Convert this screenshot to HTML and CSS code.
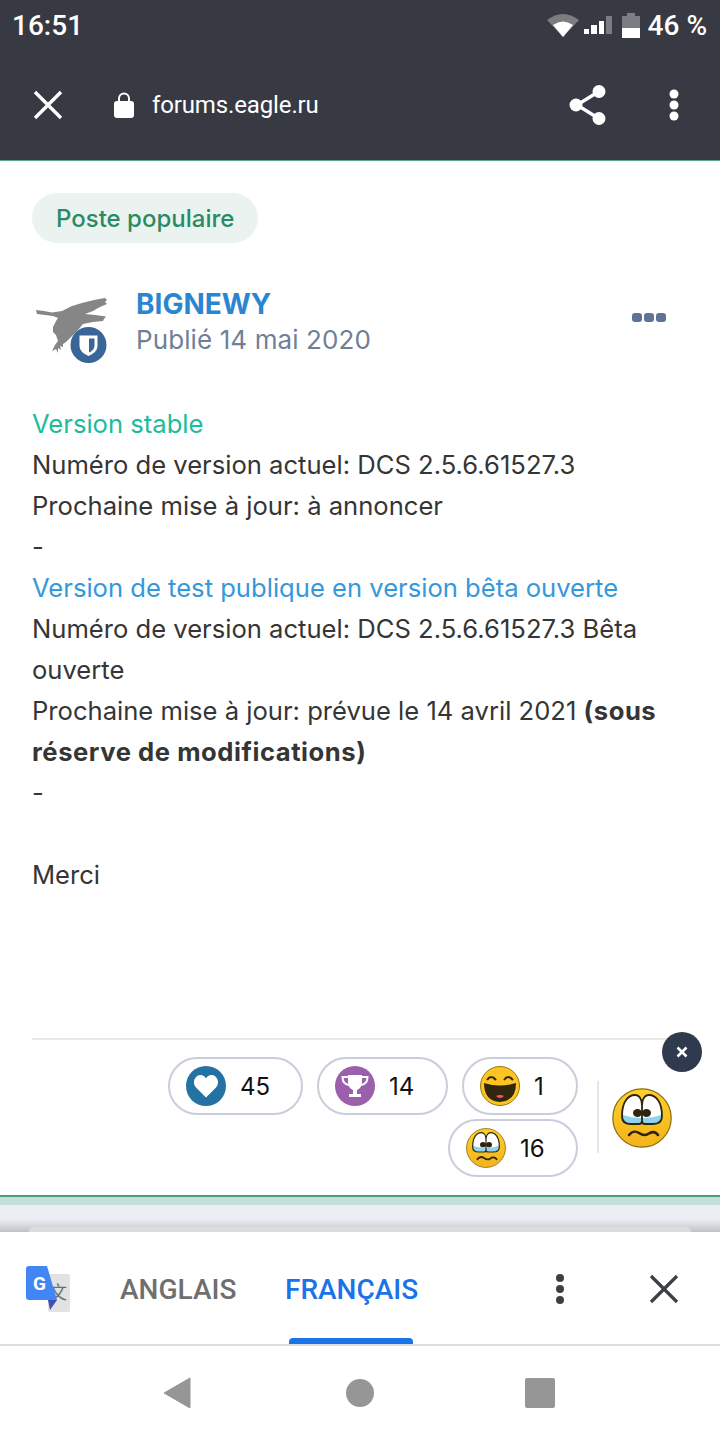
FILE: index.html
```html
<!DOCTYPE html>
<html>
<head>
  <title>forums.eagle.ru</title>
  <link rel="stylesheet" href="styles.css">
</head>
<body>
  <svg class="sprites" width="0" height="0">
    <symbol id="laugh" viewBox="0 0 40 40">
      <circle cx="20" cy="20" r="19.5" fill="#fcc521" stroke="#9a7414"/>
      <path d="M7 14q4-6 9 0M24 14q4-6 9 0" fill="none" stroke="#3a2a0c" stroke-width="2"/>
      <path d="M4 17q16 5 32 0q0 18-16 19q-16-1-16-19z" fill="#33260e"/>
      <path d="M16 30q4-2 8 0q-4 4-8 0z" fill="#f0566e"/>
    </symbol>
    <symbol id="cry" viewBox="0 0 60 60">
      <defs>
        <linearGradient id="cry-fill" x1="0" y1="0" x2="0" y2="1">
          <stop offset="0" stop-color="#fdd02a"/>
          <stop offset="1" stop-color="#f3b31c"/>
        </linearGradient>
      </defs>
      <circle cx="30" cy="30" r="29.2" fill="url(#cry-fill)" stroke="#8a6a14" stroke-width="1.2"/>
      <path d="M10 28C10 14 16 7 23 7C27 7 30 11 30 17C30 11 33 7 37 7C44 7 50 14 50 28C50 34 47 36 41 36H19C13 36 10 34 10 28z" fill="#fff"/>
      <path d="M10 26C15 29 24 30 30 30C36 30 45 29 50 26C51 33 47 36 41 36H19C13 36 9 33 10 26z" fill="#8fd4ee"/>
      <path d="M10 28C10 14 16 7 23 7C27 7 30 11 30 17C30 11 33 7 37 7C44 7 50 14 50 28C50 34 47 36 41 36H33C31 36 30 35 30 33C30 35 29 36 27 36H19C13 36 10 34 10 28zM30 17V33" fill="none" stroke="#2e2410" stroke-width="1.800"/>
      <ellipse cx="25.500" cy="25" rx="4.500" ry="4" fill="#2e2410"/>
      <ellipse cx="34.500" cy="25" rx="4.500" ry="4" fill="#2e2410"/>
      <path d="M17 47C20 43 24 43 27 45S33 48 36 46S43 43 46 47" fill="none" stroke="#2e2410" stroke-width="2.600" stroke-linecap="round"/>
    </symbol>
  </svg>

  <header class="chrome">
    <div class="status-bar">
      <span class="clock">16:51</span>
      <div class="status-icons">
        <svg class="wifi" width="32" height="26" viewBox="0 0 32 26">
          <path d="M0 8Q16-4 32 8L16 25z" fill="#7b7d82"/>
          <path d="M6 13Q16 6 26 13L16 25z" fill="#fff"/>
        </svg>
        <div class="signal">
          <i class="bar bar-1"></i><i class="bar bar-2"></i><i class="bar bar-3"></i><i class="bar bar-4"></i>
        </div>
        <div class="battery"><i class="battery-nub"></i><i class="battery-empty"></i><i class="battery-full"></i></div>
        <span class="battery-text">46 %</span>
      </div>
    </div>
    <div class="toolbar">
      <svg class="tool-close" width="30" height="30" viewBox="0 0 30 30">
        <path d="M2 2L28 28M28 2L2 28" stroke="#fff" stroke-width="3.4" fill="none"/>
      </svg>
      <svg class="lock" width="20" height="26" viewBox="0 0 20 26">
        <path d="M5 11V6.500a5 5 0 0 1 10 0V11" fill="none" stroke="#fff" stroke-width="2"/>
        <rect x="0" y="9" width="20" height="17" rx="3" fill="#fff"/>
      </svg>
      <span class="url">forums.eagle.ru</span>
      <svg class="share" width="38" height="42" viewBox="0 0 38 42">
        <path d="M29 8L8 21L29 34" fill="none" stroke="#fff" stroke-width="3.4"/>
        <circle cx="30" cy="7.500" r="6.500" fill="#fff"/>
        <circle cx="7" cy="21" r="6.500" fill="#fff"/>
        <circle cx="30" cy="34.500" r="6.500" fill="#fff"/>
      </svg>
      <svg class="tool-menu" width="10" height="32" viewBox="0 0 10 32">
        <circle cx="5" cy="5" r="4.500" fill="#fff"/>
        <circle cx="5" cy="16" r="4.500" fill="#fff"/>
        <circle cx="5" cy="27" r="4.500" fill="#fff"/>
      </svg>
    </div>
  </header>

  <main class="post">
    <div class="tag">Poste populaire</div>

    <div class="author">
      <svg class="avatar" width="90" height="80" viewBox="0 0 90 80">
        <path d="M11 20L19 21L27 22.500L37 21L47 16L57 13L69 10L80 8L82 10L80 12L82 14L75 17L68 21L60 24L70 25L81 26.500L79 29L78 31L68 32L58 34L53 40L47 46L41 52L38 54L38 57L35 56L36 60L33 58L33 63L31 59L27 61L30 55L33 51L31 45L28 42L28 37L31 31L33 28L28 26L12 24z" fill="#868686"/>
        <circle cx="63.500" cy="55" r="18" fill="#3a6598"/>
        <path d="M54.500 45.500H72.500V56Q72.500 62 63.500 66Q54.500 62 54.500 56z" fill="#fff"/>
        <path d="M64 48.500H69.500V55.500Q69.500 60 64 62.500z" fill="#3a6598"/>
      </svg>
      <div class="author-info">
        <div class="author-name">BIGNEWY</div>
        <div class="post-date">Publié 14 mai 2020</div>
      </div>
      <div class="post-menu"><i></i><i></i><i></i></div>
    </div>

    <div class="post-body">
      <div class="stable">Version stable</div>
      <div>Numéro de version actuel: DCS 2.5.6.61527.3</div>
      <div>Prochaine mise à jour: à annoncer</div>
      <div>-</div>
      <div class="beta">Version de test publique en version bêta ouverte</div>
      <div>Numéro de version actuel: DCS 2.5.6.61527.3 Bêta ouverte</div>
      <div>Prochaine mise à jour: prévue le 14 avril 2021 <b>(sous réserve de modifications)</b></div>
      <div>-</div>
      <br>
      <div>Merci</div>
    </div>

    <footer class="post-footer">
      <button class="dismiss">
        <svg width="12" height="12" viewBox="0 0 12 12"><path d="M1.500 1.500L10.500 10.500M10.500 1.500L1.500 10.500" stroke="#fff" stroke-width="2.600" fill="none"/></svg>
      </button>
      <div class="reaction-list">
        <div class="reaction reaction-like">
          <svg class="reaction-icon" viewBox="0 0 40 40">
            <circle cx="20" cy="20" r="20" fill="#2372a3"/>
            <path d="M20 31.500L10 21.500C5.500 16.500 9 9 14.500 9C17 9 19 10.500 20 12.500C21 10.500 23 9 25.500 9C31 9 34.500 16.500 30 21.500z" fill="#fff"/>
          </svg>
          <span>45</span>
        </div>
        <div class="reaction reaction-trophy">
          <svg class="reaction-icon" viewBox="0 0 40 40">
            <circle cx="20" cy="20" r="20" fill="#9b5fab"/>
            <path d="M13 9H27V16Q27 22 22 24V28H26V31H14V28H18V24Q13 22 13 16z" fill="#fff"/>
            <path d="M13 11H7.500Q7.500 18 14 19M27 11H32.500Q32.500 18 26 19" fill="none" stroke="#fff" stroke-width="2"/>
          </svg>
          <span>14</span>
        </div>
        <div class="reaction reaction-haha">
          <svg class="reaction-icon"><use href="#laugh"/></svg>
          <span>1</span>
        </div>
        <div class="reaction reaction-sad">
          <svg class="reaction-icon"><use href="#cry"/></svg>
          <span>16</span>
        </div>
      </div>
      <div class="my-reaction">
        <svg class="my-reaction-icon"><use href="#cry"/></svg>
      </div>
    </footer>
  </main>

  <div class="next-post">
    <div class="next-card"></div>
  </div>

  <section class="translate-bar">
    <div class="translate-logo">
      <div class="logo-back"><span class="logo-wen">文</span></div>
      <svg class="logo-front" width="32" height="44" viewBox="0 0 32 44">
        <path d="M22 34L31 34L24 44z" fill="#3f51b5"/>
        <path d="M3 0H21L31 34H3Q0 34 0 31V3Q0 0 3 0z" fill="#4285f4"/>
      </svg>
      <span class="logo-g">G</span>
    </div>
    <div class="lang">ANGLAIS</div>
    <div class="lang lang-active">FRANÇAIS</div>
    <svg class="translate-menu" width="10" height="32" viewBox="0 0 10 32">
      <circle cx="5" cy="5" r="4" fill="#3c4043"/>
      <circle cx="5" cy="16" r="4" fill="#3c4043"/>
      <circle cx="5" cy="27" r="4" fill="#3c4043"/>
    </svg>
    <svg class="translate-close" width="30" height="30" viewBox="0 0 30 30">
      <path d="M2 2L28 28M28 2L2 28" stroke="#3c4043" stroke-width="3.200" fill="none"/>
    </svg>
  </section>

  <nav class="nav-bar">
    <svg width="28" height="32" viewBox="0 0 28 32"><path d="M26 1V31L0 16z" fill="#969696" stroke="#969696" stroke-linejoin="round"/></svg>
    <div class="nav-home"></div>
    <div class="nav-recent"></div>
  </nav>
</body>
</html>
```

FILE: styles.css
```css
html, body {
  margin: 0;
  padding: 0;
}
body {
  width: 720px;
  height: 1440px;
  display: flex;
  flex-direction: column;
  overflow: hidden;
  background-color: #fff;
  font-family: Inter, "Noto Sans", sans-serif;
  color: #353535;
}
.sprites {
  position: absolute;
}
svg {
  display: block;
  flex: none;
}

/* browser chrome */
.chrome {
  background-color: #373a42;
  color: #fff;
  font-family: Roboto, sans-serif;
  border-bottom: 1px solid #5aa88c;
}
.status-bar {
  height: 50px;
  display: flex;
  align-items: center;
  justify-content: space-between;
  padding: 0 13px 0 12px;
}
.clock {
  font-size: 28px;
  font-weight: 500;
}
.status-icons {
  display: flex;
  align-items: center;
}
.wifi {
  margin: 0 4px 0 0;
}
.signal {
  display: flex;
  align-items: flex-end;
  gap: 2px;
  height: 18px;
  margin: 0 10px 0 1px;
}
.bar {
  width: 5.5px;
  background-color: #fff;
}
.bar-1 { height: 5px; }
.bar-2 { height: 9px; }
.bar-3 { height: 13px; }
.bar-4 { height: 18px; background-color: #7b7d82; }
.battery {
  display: flex;
  flex-direction: column;
  align-items: center;
  width: 18px;
  margin-right: 8px;
}
.battery-nub {
  width: 8px;
  height: 3px;
  background-color: #7b7d82;
}
.battery-empty {
  width: 18px;
  height: 12px;
  background-color: #7b7d82;
}
.battery-full {
  width: 18px;
  height: 10px;
  background-color: #fff;
}
.battery-text {
  font-size: 28px;
  font-weight: 500;
}
.toolbar {
  height: 110px;
  display: flex;
  align-items: center;
  padding-left: 33px;
  box-sizing: border-box;
}
.lock {
  margin-left: 51px;
}
.url {
  font-size: 24px;
  letter-spacing: -0.13px;
  margin-left: 18px;
  flex: 1;
}
.share {
  margin-right: 62px;
}
.tool-menu {
  margin-right: 41px;
}

/* post */
.post {
  flex: 1;
  display: flex;
  flex-direction: column;
  padding: 32px 32px 0;
  min-height: 0;
}
.tag {
  align-self: flex-start;
  height: 50px;
  line-height: 52px;
  padding: 0 24px;
  border-radius: 25px;
  background-color: #ebf3f1;
  color: #2a8a63;
  font-size: 24px;
  font-weight: 500;
}
.author {
  display: flex;
  align-items: flex-start;
  margin-top: 47px;
  margin-left: -7px;
}
.author-info {
  flex: 1;
  margin-left: 21px;
  margin-top: -3px;
}
.author-name {
  font-size: 28px;
  font-weight: 700;
  color: #2a86d0;
  line-height: 34px;
}
.post-date {
  font-size: 26px;
  letter-spacing: 0.1px;
  color: #6f7f9a;
  line-height: 38px;
}
.post-menu {
  display: flex;
  gap: 2px;
  margin: 23px 22px 0 0;
}
.post-menu i {
  width: 10px;
  height: 9px;
  border-radius: 3px;
  background-color: #5f7399;
}
.post-body {
  margin-top: 33px;
  font-size: 25.6px;
  line-height: 41px;
}
.post-body b {
  letter-spacing: 0.55px;
}
.stable {
  color: #1abc9c;
}
.beta {
  color: #3498db;
}

/* reactions */
.post-footer {
  position: relative;
  margin-top: auto;
  height: 157px;
  box-sizing: border-box;
  border-top: 2px solid #e8e8e8;
  padding-top: 17px;
  display: flex;
  justify-content: flex-end;
  align-items: flex-start;
}
.dismiss {
  position: absolute;
  top: -8px;
  right: -14px;
  width: 40px;
  height: 40px;
  padding: 0;
  border: none;
  border-radius: 50%;
  background-color: #2f3a4e;
  display: flex;
  align-items: center;
  justify-content: center;
}
.reaction-list {
  width: 430px;
  display: flex;
  flex-wrap: wrap;
  justify-content: flex-end;
  gap: 4px 14px;
}
.reaction {
  height: 58px;
  box-sizing: border-box;
  border: 2px solid #c8cedb;
  border-radius: 29px;
  display: flex;
  align-items: center;
  padding-left: 16px;
  font-size: 24px;
  color: #111;
}
.reaction span {
  margin-left: 14px;
}
.reaction-like { width: 135px; }
.reaction-trophy { width: 131px; }
.reaction-haha { width: 116px; }
.reaction-sad { width: 130px; }
.reaction-icon {
  width: 40px;
  height: 40px;
}
.my-reaction {
  margin: 24px 16px 0 19px;
  height: 72px;
  border-left: 2px solid #e4e6e9;
  padding-left: 13px;
  padding-top: 7px;
  box-sizing: border-box;
}
.my-reaction-icon {
  width: 60px;
  height: 60px;
}

/* peek of the next post */
.next-post {
  height: 37px;
  box-sizing: border-box;
  border-top: 2px solid #4a9d80;
  padding: 30px 29px 0;
  background: linear-gradient(#c5ded9 8px, #ebeff4 8px, #ebeff4 22px, #bfc2c7 35px);
}
.next-card {
  height: 5px;
  border-radius: 5px 5px 0 0;
  background-color: #dcdcdc;
}

/* translate bar */
.translate-bar {
  position: relative;
  height: 114px;
  box-sizing: border-box;
  border-bottom: 2px solid #dcdce0;
  padding-top: 2px;
  display: flex;
  align-items: center;
  font-family: Roboto, sans-serif;
}
.translate-logo {
  position: relative;
  width: 44px;
  height: 46px;
  margin: 0 50px 0 26px;
}
.logo-back {
  position: absolute;
  left: 22px;
  top: 8px;
  width: 22px;
  height: 38px;
  background-color: #e2e2e2;
  border-radius: 2px;
}
.logo-wen {
  position: absolute;
  left: 1px;
  top: 6px;
  font-family: "Noto Sans CJK SC", sans-serif;
  font-size: 18px;
  line-height: 22px;
  color: #5f7478;
}
.logo-front {
  position: absolute;
  left: 0;
  top: 0;
}
.logo-g {
  position: absolute;
  left: 7px;
  top: 4px;
  font-size: 19px;
  font-weight: 700;
  line-height: 28px;
  color: #fff;
}
.lang {
  position: relative;
  font-size: 28px;
  font-weight: 500;
  color: #6f6f6f;
  width: 165px;
}
.lang-active {
  color: #1a73e8;
  width: 260px;
}
.lang-active::after {
  content: "";
  position: absolute;
  left: 4px;
  bottom: -38px;
  width: 124px;
  height: 6px;
  border-radius: 4px 4px 0 0;
  background-color: #1a73e8;
}
.translate-menu {
  margin-left: 10px;
}
.translate-close {
  margin-left: 84px;
}

/* android nav */
.nav-bar {
  flex: none;
  height: 94px;
  padding-right: 2px;
  box-sizing: border-box;
  display: flex;
  align-items: center;
  justify-content: center;
  gap: 154px;
}
.nav-home {
  width: 28px;
  height: 28px;
  border-radius: 50%;
  background-color: #969696;
}
.nav-recent {
  width: 30px;
  height: 30px;
  margin-left: -3px;
  border-radius: 2px;
  background-color: #969696;
}
```
